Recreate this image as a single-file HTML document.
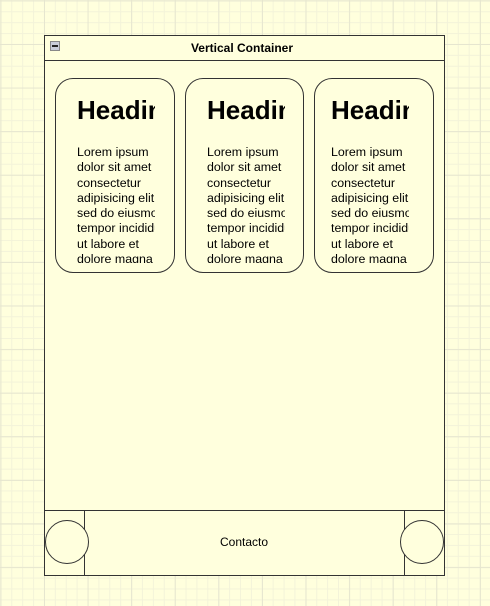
<!DOCTYPE html>
<html><head><style>
html,body{margin:0;padding:0}
body{width:490px;height:606px;position:relative;overflow:hidden;background-color:#ffffdd;
background-image:
linear-gradient(#e6e6cf 1px,transparent 1px),linear-gradient(90deg,#e6e6cf 1px,transparent 1px),
linear-gradient(#f3f3d9 1px,transparent 1px),linear-gradient(90deg,#f3f3d9 1px,transparent 1px);
background-size:43.6px 43.6px,43.6px 43.6px,10.9px 10.9px,10.9px 10.9px;
background-position:0 0.4px,0.4px 0,0 0.4px,0.4px 0;
font-family:"Liberation Sans",sans-serif;}
.box{position:absolute;border:1px solid #333;box-sizing:border-box;background:#ffffdd}
.card{position:absolute;top:78px;height:195px;border:1px solid #333;border-radius:18px;box-sizing:border-box;background:#ffffdd}
.txt{position:absolute;overflow:hidden;width:78px;top:16px;height:168px;left:21px;color:#000}
.txt h1{margin:0;font-size:26px;font-weight:bold;white-space:nowrap;line-height:30px;height:50px}
.txt p{margin:0;font-size:12.4px;line-height:15.3px;white-space:nowrap}
.circ{position:absolute;border:1px solid #333;border-radius:50%;box-sizing:border-box;background:#ffffdd}
</style></head><body>
<div class="box" style="left:44px;top:35px;width:401px;height:541px"></div>
<div style="position:absolute;left:44px;top:60px;width:400px;height:1px;background:#333"></div>
<div style="position:absolute;left:50px;top:41px;width:8px;height:8px;background:#c8ccd8;border:1px solid #888"><div style="position:absolute;left:1px;top:3px;width:6px;height:2px;background:#222"></div></div>
<div style="position:absolute;left:42px;top:41px;width:400px;text-align:center;font-size:12px;font-weight:bold;color:#000">Vertical Container</div>

<div class="card" style="left:55px;width:120px"><div class="txt"><h1>Heading</h1><p>Lorem ipsum<br>dolor sit amet<br>consectetur<br>adipisicing elit<br>sed do eiusmod<br>tempor incididunt<br>ut labore et<br>dolore magna</p></div></div>
<div class="card" style="left:185px;width:119px"><div class="txt"><h1>Heading</h1><p>Lorem ipsum<br>dolor sit amet<br>consectetur<br>adipisicing elit<br>sed do eiusmod<br>tempor incididunt<br>ut labore et<br>dolore magna</p></div></div>
<div class="card" style="left:314px;width:120px"><div class="txt" style="left:16px"><h1>Heading</h1><p>Lorem ipsum<br>dolor sit amet<br>consectetur<br>adipisicing elit<br>sed do eiusmod<br>tempor incididunt<br>ut labore et<br>dolore magna</p></div></div>

<div class="box" style="left:44px;top:510px;width:401px;height:66px"></div>
<div style="position:absolute;left:84px;top:510px;width:1px;height:66px;background:#333"></div>
<div style="position:absolute;left:404px;top:510px;width:1px;height:66px;background:#333"></div>
<div class="circ" style="left:45px;top:520px;width:44px;height:44px"></div>
<div class="circ" style="left:400px;top:520px;width:44px;height:44px"></div>
<div style="position:absolute;left:84px;top:535px;width:320px;text-align:center;font-size:12px;color:#000">Contacto</div>
</body></html>
